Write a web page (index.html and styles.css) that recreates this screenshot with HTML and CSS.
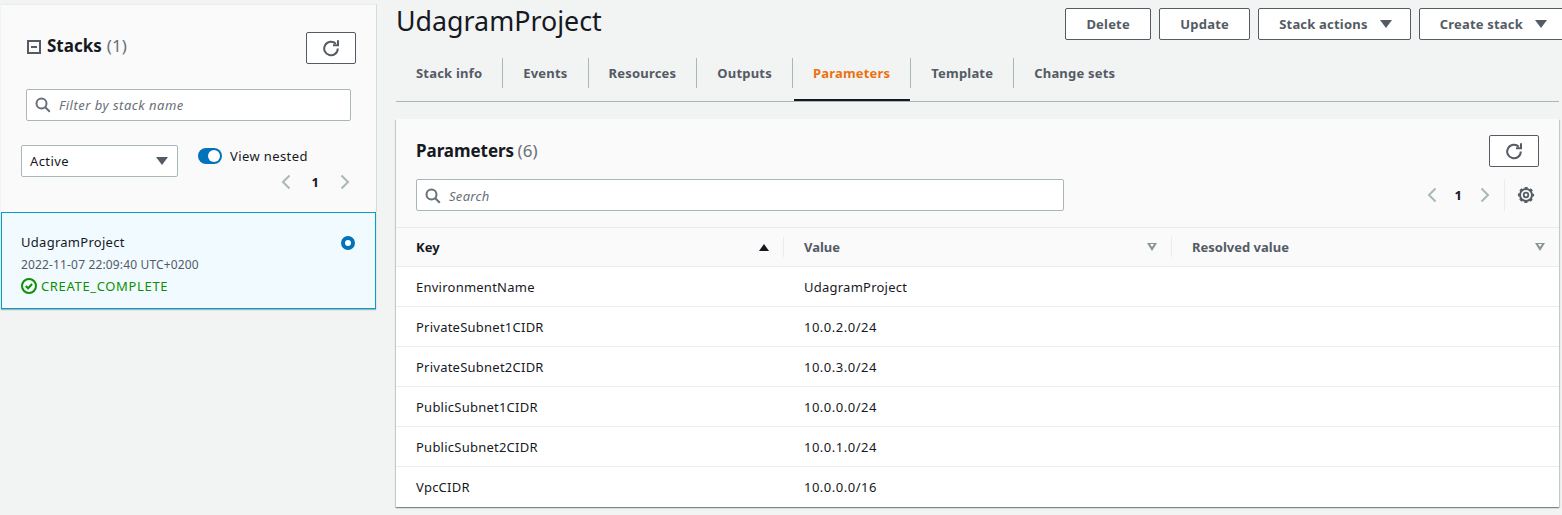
FILE: index.html
```html
<!DOCTYPE html>
<html lang="en">
<head>
  <meta charset="UTF-8" />
  <title>UdagramProject</title>
  <link rel="stylesheet" href="styles.css">
</head>
<body>
  <div class="page">
    <aside class="sidebar">
      <div class="stacks-panel">
        <div class="stacks-head">
          <h2 class="stacks-title">
            <svg class="collapse-icon" width="14" height="14" viewBox="0 0 14 14"><rect x="1" y="1" width="12" height="12" fill="none" stroke="#545b64" stroke-width="2"/><path d="M4 7h6" stroke="#545b64" stroke-width="2"/></svg>
            Stacks <span class="count">(1)</span>
          </h2>
          <button class="btn btn-icon" type="button">
            <svg width="18" height="18" viewBox="0 0 18 18"><path d="M15.8 9.5a6.8 6.8 0 1 1-2-4.8" fill="none" stroke="#545b64" stroke-width="2"/><path d="M16 1.2v5h-5" fill="none" stroke="#545b64" stroke-width="2"/></svg>
          </button>
        </div>
        <div class="search search-stacks">
          <svg width="16" height="16" viewBox="0 0 16 16"><circle cx="6.5" cy="6.5" r="5" fill="none" stroke="#687078" stroke-width="2"/><path d="M10.2 10.2l4.6 4.6" stroke="#687078" stroke-width="2"/></svg>
          <span>Filter by stack name</span>
        </div>
        <div class="filters">
          <div class="select"><span>Active</span> <i class="caret"></i></div>
          <div class="filter-side">
            <div class="toggle-row"><span class="toggle"></span>View nested</div>
            <div class="pager">
              <svg width="12" height="16" viewBox="0 0 12 16"><path d="M9.5 1.5L3 8l6.5 6.5" fill="none" stroke="#aab7b8" stroke-width="2"/></svg>
              <b>1</b>
              <svg width="12" height="16" viewBox="0 0 12 16"><path d="M2.5 1.5L9 8l-6.5 6.5" fill="none" stroke="#aab7b8" stroke-width="2"/></svg>
            </div>
          </div>
        </div>
      </div>
      <div class="stack-card">
        <div class="stack-info">
          <div class="stack-name">UdagramProject</div>
          <div class="stack-date">2022-11-07 22:09:40 UTC+0200</div>
          <div class="stack-status">
            <svg width="16" height="16" viewBox="0 0 16 16"><circle cx="8" cy="8" r="7" fill="none" stroke="#0e9000" stroke-width="2"/><path d="M4.8 8l2.3 2.3 4-4.3" fill="none" stroke="#0e9000" stroke-width="2"/></svg>
            CREATE_COMPLETE
          </div>
        </div>
        <span class="radio"></span>
      </div>
    </aside>

    <main class="main">
      <div class="title-row">
        <h1>UdagramProject</h1>
        <div class="actions">
          <button class="btn btn-delete" type="button">Delete</button>
          <button class="btn btn-update" type="button">Update</button>
          <button class="btn" type="button">Stack actions <i class="caret"></i></button>
          <button class="btn" type="button">Create stack <i class="caret"></i></button>
        </div>
      </div>

      <nav class="tabs">
        <a>Stack info</a>
        <a>Events</a>
        <a>Resources</a>
        <a>Outputs</a>
        <a class="active">Parameters</a>
        <a>Template</a>
        <a>Change sets</a>
      </nav>

      <section class="panel">
        <div class="panel-head">
          <div class="panel-title-row">
            <h2>Parameters <span class="count">(6)</span></h2>
            <button class="btn btn-icon" type="button">
              <svg width="18" height="18" viewBox="0 0 18 18"><path d="M15.8 9.5a6.8 6.8 0 1 1-2-4.8" fill="none" stroke="#545b64" stroke-width="2"/><path d="M16 1.2v5h-5" fill="none" stroke="#545b64" stroke-width="2"/></svg>
            </button>
          </div>
          <div class="panel-tools">
            <div class="search search-params">
              <svg width="16" height="16" viewBox="0 0 16 16"><circle cx="6.5" cy="6.5" r="5" fill="none" stroke="#687078" stroke-width="2"/><path d="M10.2 10.2l4.6 4.6" stroke="#687078" stroke-width="2"/></svg>
              <span>Search</span>
            </div>
            <div class="pager-wrap">
              <div class="pager">
                <svg width="12" height="16" viewBox="0 0 12 16"><path d="M9.5 1.5L3 8l6.5 6.5" fill="none" stroke="#aab7b8" stroke-width="2"/></svg>
                <b>1</b>
                <svg width="12" height="16" viewBox="0 0 12 16"><path d="M2.5 1.5L9 8l-6.5 6.5" fill="none" stroke="#aab7b8" stroke-width="2"/></svg>
              </div>
              <span class="tool-sep"></span>
              <svg width="18" height="18" viewBox="0 0 18 18"><circle cx="9" cy="9" r="6" fill="none" stroke="#545b64" stroke-width="2"/><circle cx="9" cy="9" r="7.2" fill="none" stroke="#545b64" stroke-width="1.8" stroke-dasharray="2.9 2.75" stroke-dashoffset="1.45"/><circle cx="9" cy="9" r="2.3" fill="none" stroke="#545b64" stroke-width="1.8"/></svg>
            </div>
          </div>
        </div>

        <table class="params">
          <thead>
            <tr>
              <th class="col-key"><div class="th-in"><span class="th-key">Key</span><i class="sort-up"></i></div></th>
              <th class="col-val"><div class="th-in th-sep"><span>Value</span><i class="sort-down"></i></div></th>
              <th><div class="th-in th-sep"><span>Resolved value</span><i class="sort-down"></i></div></th>
            </tr>
          </thead>
          <tbody>
            <tr><td>EnvironmentName</td><td>UdagramProject</td><td></td></tr>
            <tr><td>PrivateSubnet1CIDR</td><td class="num">10.0.2.0/24</td><td></td></tr>
            <tr><td>PrivateSubnet2CIDR</td><td class="num">10.0.3.0/24</td><td></td></tr>
            <tr><td>PublicSubnet1CIDR</td><td class="num">10.0.0.0/24</td><td></td></tr>
            <tr><td>PublicSubnet2CIDR</td><td class="num">10.0.1.0/24</td><td></td></tr>
            <tr><td>VpcCIDR</td><td class="num">10.0.0.0/16</td><td></td></tr>
          </tbody>
        </table>
      </section>
    </main>
  </div>
</body>
</html>
```

FILE: styles.css
```css
* { box-sizing: border-box; }
html, body { height: 100%; }
body { margin: 0; background: #f2f3f3; color: #16191f; font-family: "Noto Sans", sans-serif; font-size: 13px; overflow: hidden; }
h1, h2 { margin: 0; }

.page { display: flex; align-items: flex-start; width: 1562px; height: 515px; overflow: hidden; }

/* left column */
.sidebar { flex: none; width: 376px; margin: 4px 0 0 1px; }
.stacks-panel { height: 208px; padding: 27px 20px 0 20px; background: #fafafa; border-right: 1px solid #d5dbdb; border-top: 1px solid #eaeded; }
.stacks-head { display: flex; justify-content: space-between; align-items: center; padding: 0 0 0 6px; }
.stacks-title { display: flex; align-items: center; gap: 6px; font-size: 17px; font-weight: 700; line-height: 30px; margin-top: -4px; }
.collapse-icon { margin-top: 2px; }
.count { font-weight: 400; color: #687078; margin-left: -1px; letter-spacing: .1px; }

.btn { display: inline-flex; align-items: center; justify-content: center; gap: 12px; height: 32px; padding: 0 20px; background: #fff; border: 1px solid #545b64; border-radius: 2px; color: #545b64; font: 700 13px "Noto Sans", sans-serif; letter-spacing: .2px; white-space: nowrap; }
.btn-icon { width: 50px; padding: 0; }
.btn-delete { min-width: 86px; }
.btn-update { min-width: 91px; }
.btn .caret { margin-right: -2px; }

.search { display: flex; align-items: center; gap: 8px; height: 32px; padding: 0 8px; background: #fff; border: 1px solid #aab7b8; border-radius: 2px; color: #687078; font-style: italic; font-size: 13px; }
.search-stacks { width: 325px; margin: 25px 0 0 5px; letter-spacing: .5px; }
.search-params { width: 648px; padding-top: 1px; letter-spacing: .3px; }

.filters { display: flex; gap: 20px; margin-top: 24px; }
.select { display: flex; align-items: center; justify-content: space-between; width: 157px; height: 32px; padding: 0 9px 0 8px; background: #fff; border: 1px solid #aab7b8; border-radius: 2px; letter-spacing: .4px; }
.caret { display: inline-block; width: 0; height: 0; border-left: 6px solid transparent; border-right: 6px solid transparent; border-top: 8px solid #545b64; }
.filter-side { width: 130px; margin-top: 1px; }
.toggle-row { display: flex; align-items: center; gap: 8px; height: 20px; letter-spacing: .4px; }
.toggle { position: relative; width: 24px; height: 16px; border-radius: 8px; background: #0073bb; }
.toggle::after { content: ""; position: absolute; top: 2px; right: 2px; width: 12px; height: 12px; border-radius: 50%; background: #fff; }

.pager { display: flex; align-items: center; gap: 20px; }
.pager b { font-size: 13px; }
.filter-side .pager { justify-content: flex-end; margin: 7px 0 0 0; width: 153px; }

.stack-card { display: flex; justify-content: space-between; height: 97px; margin-right: 1px; padding: 19px 20px 0 19px; background: #f1faff; border: 1px solid #00a1c9; box-shadow: 0 1px 1px rgba(0, 28, 36, .3); }
.stack-name { line-height: 20px; letter-spacing: .28px; }
.stack-date { margin-top: 3px; line-height: 20px; font-size: 12px; color: #545b64; letter-spacing: .15px; }
.stack-status { display: flex; align-items: center; gap: 4px; line-height: 20px; margin-top: 1px; color: #0e9000; letter-spacing: .65px; }
.radio { width: 14px; height: 14px; margin-top: 4px; border: 4px solid #0073bb; border-radius: 50%; background: #fff; }

/* right column */
.main { flex: none; width: 1163px; margin-left: 19px; }
.title-row { display: flex; justify-content: space-between; align-items: flex-start; height: 52px; }
.title-row h1 { font-size: 26.8px; font-weight: 400; line-height: 36px; margin-top: 3px; }
.actions { display: flex; gap: 8px; margin: 8px -7px 0 0; }

.tabs { display: flex; height: 50px; border-bottom: 1px solid #aab7b8; padding-top: 6px; }
.tabs a { position: relative; height: 30px; line-height: 30px; padding: 0 20px; border-right: 1px solid #aab7b8; color: #545b64; font-weight: 700; letter-spacing: .2px; white-space: nowrap; }
.tabs a:last-child { border-right: 0; }
.tabs a.active { color: #ec7211; }
.tabs a.active::after { content: ""; position: absolute; left: 1px; right: 0; bottom: -13px; height: 2px; background: #16191f; }

.panel { margin-top: 17px; background: #fff; box-shadow: 0 1px 1px rgba(0, 28, 36, .3), 1px 1px 1px rgba(0, 28, 36, .15), -1px 1px 1px rgba(0, 28, 36, .15); }
.panel-head { height: 108px; padding: 16px 20px 0 20px; background: #fafafa; }
.panel-title-row { display: flex; justify-content: space-between; align-items: flex-start; height: 44px; }
.panel-title-row h2 { font-size: 17px; font-weight: 700; line-height: 30px; margin-top: 1px; letter-spacing: -.05px; }
.panel-tools { display: flex; justify-content: space-between; align-items: center; }
.pager-wrap { display: flex; align-items: center; gap: 12px; padding-right: 4px; }
.pager-wrap .pager { gap: 17px; margin-right: 1px; }
.tool-sep { width: 1px; height: 32px; background: #eaeded; }

.params { width: 100%; border-collapse: collapse; table-layout: fixed; }
.params th { height: 39px; padding: 0; background: #fafafa; border-top: 1px solid #eaeded; border-bottom: 1px solid #eaeded; text-align: left; font-weight: 700; color: #545b64; }
.col-key { width: 388px; }
.col-val { width: 388px; }
.th-in { display: flex; justify-content: space-between; align-items: center; height: 20px; padding: 0 15px 0 20px; }
.th-sep { border-left: 1px solid #eaeded; margin-left: -1px; }
th:last-child .th-in { padding-right: 14px; }
.th-key { color: #16191f; }
.sort-up { width: 0; height: 0; border-left: 5px solid transparent; border-right: 5px solid transparent; border-bottom: 7px solid #16191f; }
.sort-down { position: relative; width: 0; height: 0; border-left: 5px solid transparent; border-right: 5px solid transparent; border-top: 8px solid #879596; }
.sort-down::after { content: ""; position: absolute; top: -7px; left: -2px; width: 0; height: 0; border-left: 2px solid transparent; border-right: 2px solid transparent; border-top: 3px solid #fafafa; }
.params td { height: 40px; padding: 0 20px; border-bottom: 1px solid #eaeded; letter-spacing: .24px; }
.params td.num { letter-spacing: .5px; }
.params tr:last-child td { border-bottom: 0; }
```
